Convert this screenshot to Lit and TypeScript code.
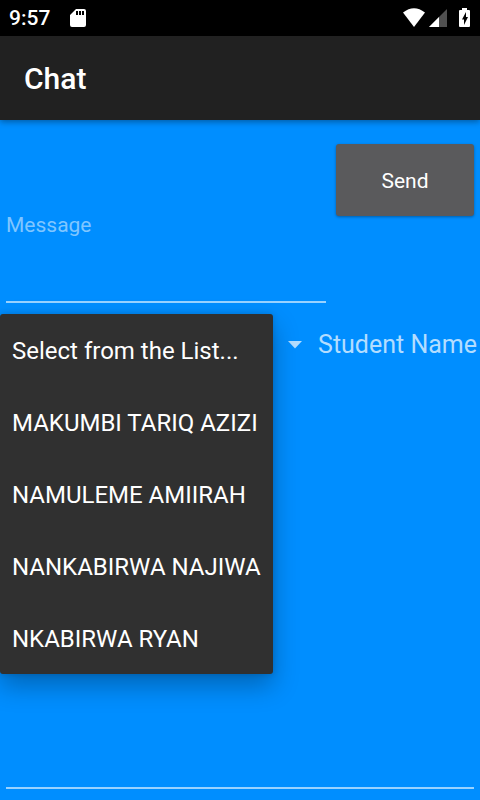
import { LitElement, html, css } from "lit";
import { customElement, property, state } from "lit/decorators.js";

@customElement("status-bar")
class StatusBar extends LitElement {
  static styles = css`
    :host {
      display: flex;
      align-items: center;
      height: 36px;
      padding: 0 9px;
      background: #000;
      color: #fff;
      font: 500 21px/36px Roboto, sans-serif;
    }
    .time {
      margin-right: 20px;
    }
    .icons {
      display: flex;
      margin-left: auto;
    }
    svg {
      display: block;
      fill: #fff;
    }
    .wifi {
      margin-right: 4px;
    }
    .signal {
      margin-right: 12px;
    }
  `;

  render() {
    return html`
      <span class="time">9:57</span>
      <svg width="16" height="20" viewBox="0 0 16 20" aria-hidden="true">
        <path
          fill-rule="evenodd"
          d="M6 1h8q2 0 2 2v14q0 2-2 2H2q-2 0-2-2V7zM6 3v4h2V3zM9 3v4h2V3zM12 3v4h2V3z"
        />
      </svg>
      <span class="icons">
        <svg class="wifi" width="22" height="20" viewBox="0 0 22 20" aria-hidden="true">
          <path d="M0 4.5Q11-4 22 4.5L11 19z" />
        </svg>
        <svg class="signal" width="18" height="20" viewBox="0 0 18 20" aria-hidden="true">
          <path d="M18 1v18H0z" fill="#505050" />
          <path d="M10 9v10H0z" />
        </svg>
        <svg width="12" height="20" viewBox="0 0 12 20" aria-hidden="true">
          <path
            fill-rule="evenodd"
            d="M3 0h5v2h2q1 0 1 1v15q0 1-1 1H1q-1 0-1-1V3q0-1 1-1h2zM7 4L3 11.5H5V17L9 9H7z"
          />
        </svg>
      </span>
    `;
  }
}

@customElement("recipient-menu")
class RecipientMenu extends LitElement {
  @property({ attribute: false }) options: string[] = [];
  @property() value = "";

  static styles = css`
    .menu {
      box-sizing: border-box;
      margin: 0;
      padding: 0;
      list-style: none;
      border-radius: 3px;
      background: #303030;
      box-shadow: 0 12px 26px rgba(0, 0, 0, 0.28), 0 0 6px rgba(0, 0, 0, 0.16);
    }
    .option {
      display: block;
      width: 100%;
      height: 72px;
      padding: 2px 12px 0;
      border: 0;
      background: none;
      color: #fff;
      font: 400 24px/36px Roboto, sans-serif;
      text-align: left;
      white-space: nowrap;
    }
  `;

  private pick(name: string) {
    this.dispatchEvent(new CustomEvent("pick", { detail: name }));
  }

  render() {
    return html`
      <ul class="menu">
        ${this.options.map(
          (name) => html`<li>
            <button class="option" type="button" @click=${() => this.pick(name)}>${name}</button>
          </li>`
        )}
      </ul>
    `;
  }
}

@customElement("app-root")
class AppRoot extends LitElement {
  @state() private open = true;
  @state() private recipient = "Select from the List...";

  private recipients = [
    "Select from the List...",
    "MAKUMBI TARIQ AZIZI",
    "NAMULEME AMIIRAH",
    "NANKABIRWA NAJIWA",
    "NKABIRWA RYAN",
  ];

  static styles = css`
    :host {
      display: flex;
      flex-direction: column;
      min-height: 100vh;
      background: #008eff;
      color: #fff;
      font-family: Roboto, sans-serif;
    }
    .appbar {
      box-sizing: border-box;
      display: flex;
      align-items: center;
      height: 84px;
      padding: 2px 24px 0;
      background: #212121;
      box-shadow: 0 2px 6px rgba(0, 0, 0, 0.35);
    }
    .title {
      margin: 0;
      font-size: 30px;
      font-weight: 500;
      line-height: 36px;
    }
    .content {
      display: flex;
      flex: 1;
      flex-direction: column;
      padding-bottom: 11px;
    }
    .compose {
      display: flex;
      align-items: flex-start;
      gap: 10px;
      padding: 24px 6px 0;
    }
    .field {
      box-sizing: border-box;
      min-width: 0;
      padding: 0;
      border: 0;
      border-radius: 0;
      border-bottom: 2px solid #99d2ff;
      outline: 0;
      background: none;
      color: #fff;
      font: 400 21px/24px Roboto, sans-serif;
      resize: none;
    }
    .field::placeholder {
      color: #80c6ff;
      opacity: 1;
    }
    .message {
      flex: 1;
      height: 159px;
      padding-top: 4px;
    }
    .send {
      width: 138px;
      height: 72px;
      padding: 2px 0 0;
      border: 0;
      border-radius: 3px;
      background: #5a5a5c;
      box-shadow: 0 1px 3px rgba(0, 0, 0, 0.35);
      color: #fff;
      font: 400 21px/24px Roboto, sans-serif;
    }
    .picker {
      position: relative;
      display: flex;
      align-items: center;
      height: 72px;
      margin-top: 6px;
    }
    .spinner {
      position: relative;
      flex: 1;
      min-width: 0;
    }
    .select {
      appearance: none;
      width: 100%;
      height: 72px;
      padding: 0 48px 0 12px;
      border: 0;
      outline: 0;
      background: none;
      color: #fff;
      font: 400 24px/36px Roboto, sans-serif;
    }
    .caret {
      position: absolute;
      top: 32px;
      right: 16px;
      fill: #b3ddff;
      pointer-events: none;
    }
    .label {
      padding-right: 3px;
      color: #b3ddff;
      font-size: 25px;
      line-height: 36px;
      white-space: nowrap;
    }
    .menu {
      position: absolute;
      top: 5px;
      left: 0;
      z-index: 1;
    }
    .history {
      flex: 1;
      min-height: 120px;
      margin: 0 6px;
    }
  `;

  private choose(e: CustomEvent<string>) {
    this.recipient = e.detail;
    this.open = false;
  }

  private showMenu(e: Event) {
    e.preventDefault();
    this.open = true;
  }

  render() {
    return html`
      <status-bar></status-bar>
      <header class="appbar"><h1 class="title">Chat</h1></header>
      <main class="content">
        <div class="compose">
          <input class="field message" type="text" placeholder="Message" aria-label="Message" />
          <button class="send" type="button">Send</button>
        </div>
        <div class="picker">
          <div class="spinner">
            <select class="select" id="student" .value=${this.recipient} @mousedown=${this.showMenu}>
              ${this.recipients.map(
                (name) => html`<option ?selected=${name === this.recipient}>${name}</option>`
              )}
            </select>
            <svg class="caret" width="14" height="8" viewBox="0 0 14 8" aria-hidden="true">
              <path d="M0 0h14L7 7.5z" />
            </svg>
          </div>
          <label class="label" for="student">Student Name</label>
          ${this.open
            ? html`<recipient-menu
                class="menu"
                .options=${this.recipients}
                .value=${this.recipient}
                @pick=${this.choose}
              ></recipient-menu>`
            : null}
        </div>
        <textarea class="field history" aria-label="Conversation" readonly></textarea>
      </main>
    `;
  }
}
